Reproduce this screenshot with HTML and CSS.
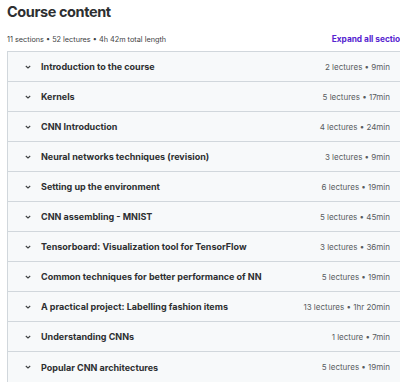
FILE: index.html
```html
<html>

<head>
  <meta name="viewport" content="width=device-width, initial-scale=1.0">
  <link rel="stylesheet" href="styles.css">
</head>

<body>
  <div id="wrapper">
    <h2 class="title">Course content</h2>
    <div class="summary">
      <span>11 sections • 52 lectures • 4h 42m total length</span>
      <span class="expand">Expand all sections</span>
    </div>
    <div class="sections">
      <div class="section">
        <span class="chev"><svg width="8" height="6" viewBox="0 0 8 6"><path d="M1.8 2 L4 4 L6.2 2" fill="none" stroke="#3e4143" stroke-width="1.1"/></svg></span>
        <span class="name">Introduction to the course</span>
        <span class="info">2 lectures • 9min</span>
      </div>
      <div class="section">
        <span class="chev"><svg width="8" height="6" viewBox="0 0 8 6"><path d="M1.8 2 L4 4 L6.2 2" fill="none" stroke="#3e4143" stroke-width="1.1"/></svg></span>
        <span class="name">Kernels</span>
        <span class="info">5 lectures • 17min</span>
      </div>
      <div class="section">
        <span class="chev"><svg width="8" height="6" viewBox="0 0 8 6"><path d="M1.8 2 L4 4 L6.2 2" fill="none" stroke="#3e4143" stroke-width="1.1"/></svg></span>
        <span class="name">CNN Introduction</span>
        <span class="info">4 lectures • 24min</span>
      </div>
      <div class="section">
        <span class="chev"><svg width="8" height="6" viewBox="0 0 8 6"><path d="M1.8 2 L4 4 L6.2 2" fill="none" stroke="#3e4143" stroke-width="1.1"/></svg></span>
        <span class="name">Neural networks techniques (revision)</span>
        <span class="info">3 lectures • 9min</span>
      </div>
      <div class="section">
        <span class="chev"><svg width="8" height="6" viewBox="0 0 8 6"><path d="M1.8 2 L4 4 L6.2 2" fill="none" stroke="#3e4143" stroke-width="1.1"/></svg></span>
        <span class="name">Setting up the environment</span>
        <span class="info">6 lectures • 19min</span>
      </div>
      <div class="section">
        <span class="chev"><svg width="8" height="6" viewBox="0 0 8 6"><path d="M1.8 2 L4 4 L6.2 2" fill="none" stroke="#3e4143" stroke-width="1.1"/></svg></span>
        <span class="name">CNN assembling - MNIST</span>
        <span class="info">5 lectures • 45min</span>
      </div>
      <div class="section">
        <span class="chev"><svg width="8" height="6" viewBox="0 0 8 6"><path d="M1.8 2 L4 4 L6.2 2" fill="none" stroke="#3e4143" stroke-width="1.1"/></svg></span>
        <span class="name">Tensorboard: Visualization tool for TensorFlow</span>
        <span class="info">3 lectures • 36min</span>
      </div>
      <div class="section">
        <span class="chev"><svg width="8" height="6" viewBox="0 0 8 6"><path d="M1.8 2 L4 4 L6.2 2" fill="none" stroke="#3e4143" stroke-width="1.1"/></svg></span>
        <span class="name">Common techniques for better performance of NN</span>
        <span class="info">5 lectures • 19min</span>
      </div>
      <div class="section">
        <span class="chev"><svg width="8" height="6" viewBox="0 0 8 6"><path d="M1.8 2 L4 4 L6.2 2" fill="none" stroke="#3e4143" stroke-width="1.1"/></svg></span>
        <span class="name">A practical project: Labelling fashion items</span>
        <span class="info">13 lectures • 1hr 20min</span>
      </div>
      <div class="section">
        <span class="chev"><svg width="8" height="6" viewBox="0 0 8 6"><path d="M1.8 2 L4 4 L6.2 2" fill="none" stroke="#3e4143" stroke-width="1.1"/></svg></span>
        <span class="name">Understanding CNNs</span>
        <span class="info">1 lecture • 7min</span>
      </div>
      <div class="section">
        <span class="chev"><svg width="8" height="6" viewBox="0 0 8 6"><path d="M1.8 2 L4 4 L6.2 2" fill="none" stroke="#3e4143" stroke-width="1.1"/></svg></span>
        <span class="name">Popular CNN architectures</span>
        <span class="info">5 lectures • 19min</span>
      </div>
    </div>
  </div>
</body>

</html>
```

FILE: styles.css
```css
* {
  box-sizing: border-box;
}

body {
  margin: 0;
  padding: 0;
  background-color: #ffffff;
  font-family: Inter, "Noto Sans", sans-serif;
  color: #2d2f31;
  overflow: hidden;
}

#wrapper {
  width: 410px;
  padding-left: 7px;
}

.title {
  margin: 0;
  padding-top: 1px;
  font-size: 14.5px;
  font-weight: 700;
  line-height: 21px;
  letter-spacing: -0.4px;
}

.summary {
  display: flex;
  justify-content: space-between;
  align-items: center;
  height: 29px;
  padding-top: 5px;
  font-size: 7.3px;
  color: #3e4143;
}

.expand {
  color: #5624d0;
  font-weight: 700;
  font-size: 8.3px;
}

.sections {
  border: 1px solid #d1d7dc;
  border-right: none;
}

.section {
  display: flex;
  align-items: center;
  height: 30px;
  padding-left: 16px;
  padding-right: 20px;
  background-color: #f7f9fa;
  border-bottom: 1px solid #d1d7dc;
}

.section:last-child {
  border-bottom: none;
}

.chev {
  display: flex;
  width: 17px;
}

.name {
  flex: 1;
  font-size: 9px;
  font-weight: 700;
}

.info {
  font-size: 8px;
  color: #585c5f;
}
```
